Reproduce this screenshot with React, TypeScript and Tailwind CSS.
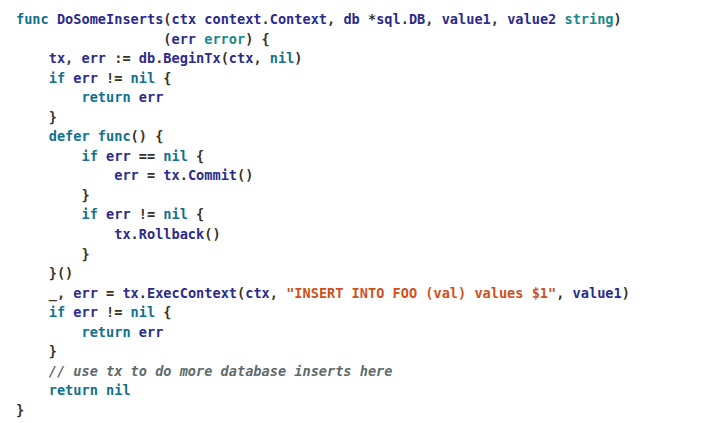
import React from 'react';

type Tok = [string, string];

const K = 'text-[#10708e]';
const I = 'text-[#2b2b8c]';
const T = 'text-[#178a8c]';
const P = 'text-[#3a3326]';
const S = 'text-[#d24f1c]';
const C = 'text-[#5d6a6c] italic';

const lines: Tok[][] = [
  [[K, 'func'], [P, ' '], [I, 'DoSomeInserts'], [P, '('], [I, 'ctx context'], [P, '.'], [I, 'Context'], [P, ', '], [I, 'db '], [P, '*'], [I, 'sql'], [P, '.'], [I, 'DB'], [P, ', '], [I, 'value1'], [P, ', '], [I, 'value2 '], [T, 'string'], [P, ')']],
  [[P, '                  ('], [I, 'err '], [T, 'error'], [P, ') {']],
  [[I, '    tx'], [P, ', '], [I, 'err '], [P, ':= '], [I, 'db'], [P, '.'], [I, 'BeginTx'], [P, '('], [I, 'ctx'], [P, ', '], [K, 'nil'], [P, ')']],
  [[K, '    if '], [I, 'err '], [P, '!= '], [K, 'nil'], [P, ' {']],
  [[K, '        return '], [I, 'err']],
  [[P, '    }']],
  [[K, '    defer func'], [P, '() {']],
  [[K, '        if '], [I, 'err '], [P, '== '], [K, 'nil'], [P, ' {']],
  [[I, '            err '], [P, '= '], [I, 'tx'], [P, '.'], [I, 'Commit'], [P, '()']],
  [[P, '        }']],
  [[K, '        if '], [I, 'err '], [P, '!= '], [K, 'nil'], [P, ' {']],
  [[I, '            tx'], [P, '.'], [I, 'Rollback'], [P, '()']],
  [[P, '        }']],
  [[P, '    }()']],
  [[P, '    _, '], [I, 'err '], [P, '= '], [I, 'tx'], [P, '.'], [I, 'ExecContext'], [P, '('], [I, 'ctx'], [P, ', '], [S, '"INSERT INTO FOO (val) values $1"'], [P, ', '], [I, 'value1'], [P, ')']],
  [[K, '    if '], [I, 'err '], [P, '!= '], [K, 'nil'], [P, ' {']],
  [[K, '        return '], [I, 'err']],
  [[P, '    }']],
  [[C, '    // use tx to do more database inserts here']],
  [[K, '    return nil']],
  [[P, '}']],
];

export default function App() {
  return (
    <div className="w-[703px] h-[423px] bg-white overflow-hidden">
      <pre className="pt-[10px] pl-[16px] font-['DejaVu_Sans_Mono',monospace] text-[13.6px] leading-[19.55px] font-bold">
        {lines.map((line, i) => (
          <div key={i} className="h-[19.55px] whitespace-pre">
            {line.map(([cls, text], j) => (
              <span key={j} className={cls}>
                {text}
              </span>
            ))}
          </div>
        ))}
      </pre>
    </div>
  );
}
